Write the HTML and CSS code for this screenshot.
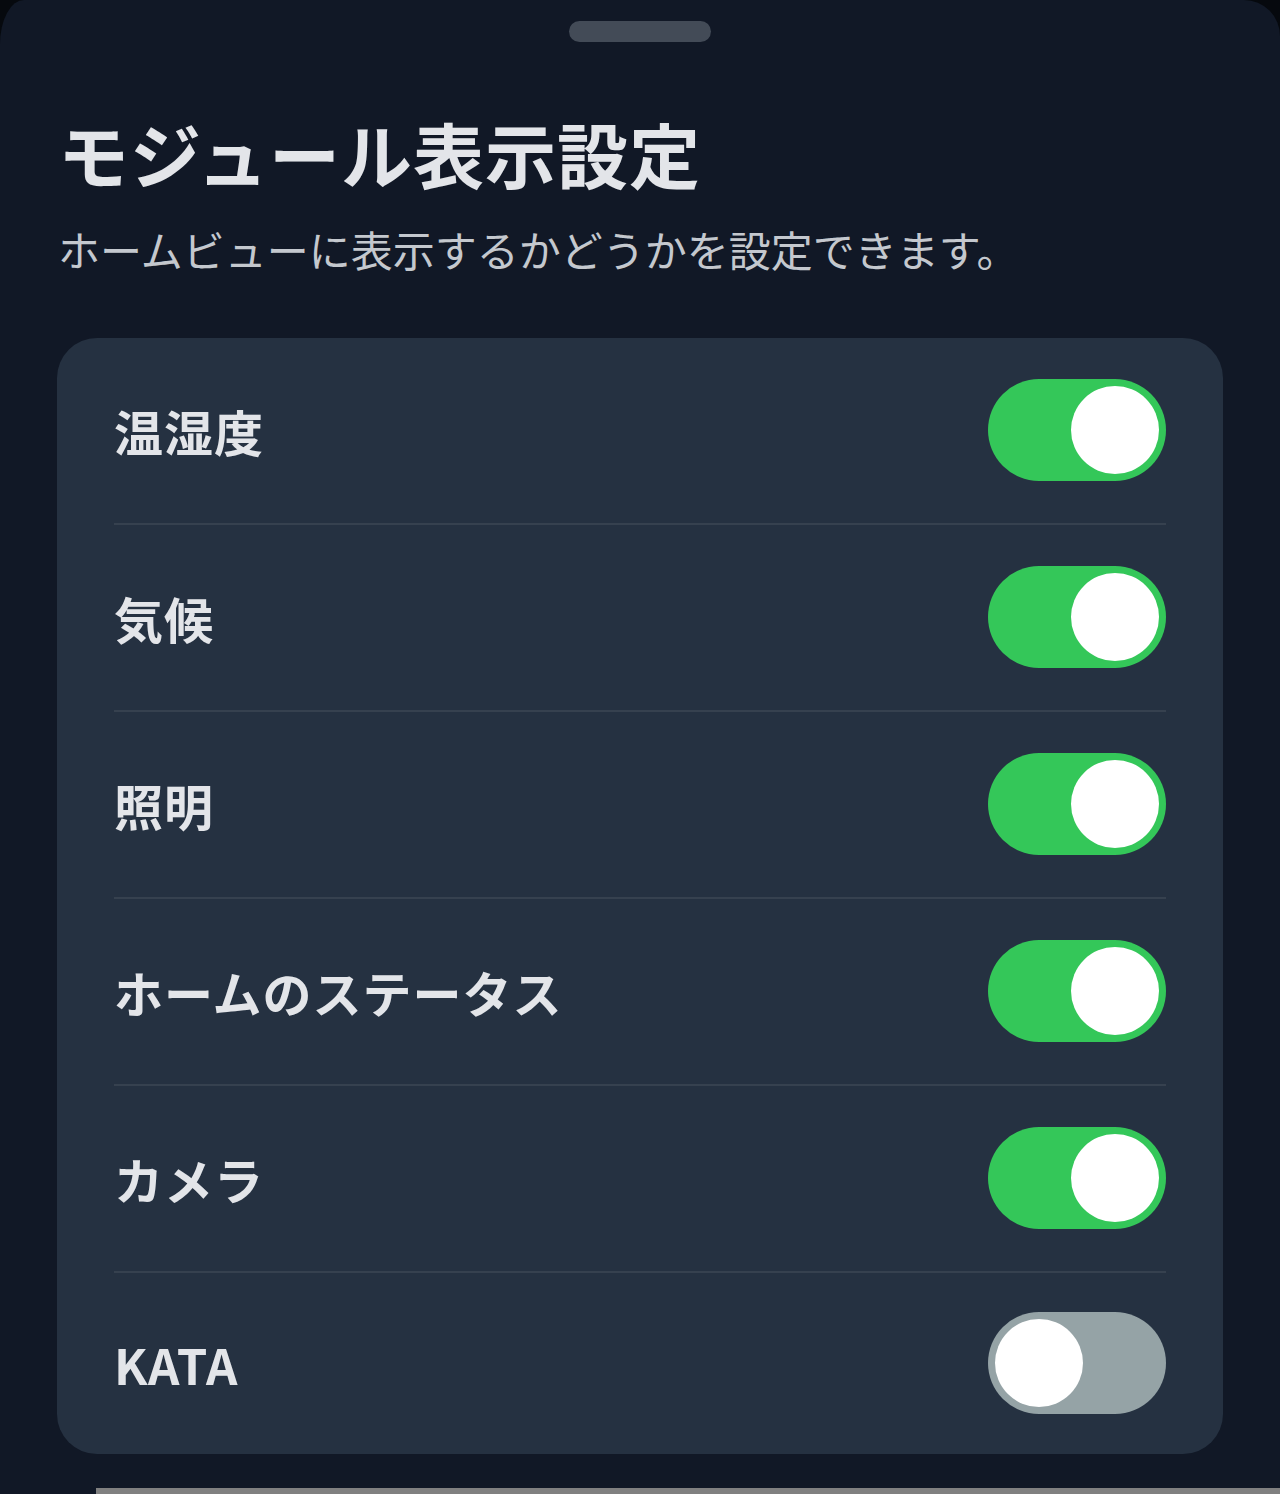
FILE: index.html
```html
<!DOCTYPE html>
<html lang="ja">
<head>
    <meta charset="UTF-8">
    <meta name="viewport" content="width=device-width, initial-scale=1.0">
    <title>モジュール表示設定</title>
    <link rel="stylesheet" href="styles.css">
</head>
<body>
    <div class="sheet">
        <div class="handle"></div>
        <h1 class="title">モジュール表示設定</h1>
        <p class="subtitle">ホームビューに表示するかどうかを設定できます。</p>
        <div class="card">
            <div class="row">
                <span class="label">温湿度</span>
                <span class="toggle on"><span class="knob"></span></span>
            </div>
            <div class="row">
                <span class="label">気候</span>
                <span class="toggle on"><span class="knob"></span></span>
            </div>
            <div class="row">
                <span class="label">照明</span>
                <span class="toggle on"><span class="knob"></span></span>
            </div>
            <div class="row">
                <span class="label">ホームのステータス</span>
                <span class="toggle on"><span class="knob"></span></span>
            </div>
            <div class="row">
                <span class="label">カメラ</span>
                <span class="toggle on"><span class="knob"></span></span>
            </div>
            <div class="row">
                <span class="label">KATA</span>
                <span class="toggle"><span class="knob"></span></span>
            </div>
        </div>
        <div class="scrollbar"></div>
    </div>
</body>
</html>
```

FILE: styles.css
```css
body {
    margin: 0;
    background-color: #06090e;
    font-family: "Noto Sans CJK JP", "Noto Sans", sans-serif;
}
.sheet {
    background-color: #111826;
    height: 1494px;
    box-sizing: border-box;
    padding: 21px 0 0;
    border-top-left-radius: 24px 44px;
    border-top-right-radius: 36px;
    display: flex;
    flex-direction: column;
}
.handle {
    width: 142px;
    height: 21px;
    margin: 0 auto;
    border-radius: 11px;
    background-color: #434b57;
}
.title {
    margin: 68px 0 0;
    padding: 0 58px;
    font-size: 71px;
    line-height: 1.2;
    font-weight: 700;
    letter-spacing: 1px;
    color: #e3e5e9;
}
.subtitle {
    margin: 29px 0 0;
    padding: 0 58px;
    font-size: 42px;
    line-height: 1.2;
    color: #c4c8ce;
}
.card {
    margin: 63px 57px 0;
    padding: 0 57px;
    background-color: #253141;
    border-radius: 40px;
}
.row {
    display: flex;
    justify-content: space-between;
    align-items: center;
    height: 185px;
    border-bottom: 2px solid #36414f;
}
.row:last-child {
    border-bottom: none;
    height: 181px;
}
.label {
    font-size: 49px;
    font-weight: 700;
    letter-spacing: 1px;
    color: #e3e5e9;
}
.toggle {
    position: relative;
    width: 178px;
    height: 102px;
    border-radius: 51px;
    background-color: #95a3a6;
}
.toggle.on {
    background-color: #34c759;
}
.knob {
    position: absolute;
    top: 7px;
    left: 7px;
    width: 88px;
    height: 88px;
    border-radius: 50%;
    background-color: #ffffff;
}
.toggle.on .knob {
    left: 83px;
}
.scrollbar {
    margin: auto 0 0 96px;
    height: 6px;
    background-color: #808080;
}
```
